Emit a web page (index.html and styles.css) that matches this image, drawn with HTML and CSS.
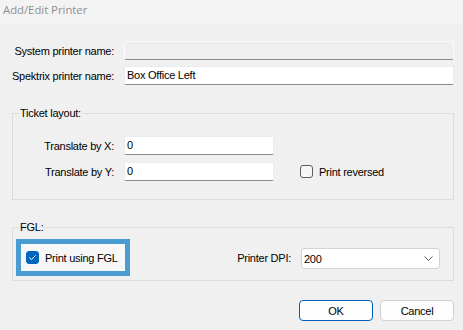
FILE: index.html
```html
<!DOCTYPE html>
<html>
<head>
<meta charset="utf-8">
<link rel="stylesheet" href="styles.css">
</head>
<body>
<div class="titlebar">Add/Edit Printer</div>
<div class="main">
  <div class="names">
    <span class="lbl">System printer name:</span>
    <div class="field disabled"></div>
    <span class="lbl">Spektrix printer name:</span>
    <div class="field">Box Office Left</div>
  </div>

  <div class="group ticket">
    <span class="legend">Ticket layout:</span>
    <div class="ticket-grid">
      <span class="lbl">Translate by X:</span>
      <div class="field">0</div>
      <span></span>
      <span class="lbl">Translate by Y:</span>
      <div class="field">0</div>
      <div class="check"><span class="box"></span><span>Print reversed</span></div>
    </div>
  </div>

  <div class="group fgl">
    <span class="legend">FGL:</span>
    <div class="fgl-row">
      <div class="highlight">
        <span class="box checked"><svg width="13" height="13" viewBox="0 0 13 13"><path d="M3.6 6.8 L5.5 8.6 L9.4 4.6" fill="none" stroke="#fff" stroke-width="1" stroke-linecap="round" stroke-linejoin="round"/></svg></span>
        <span>Print using FGL</span>
      </div>
      <div class="dpi">
        <span class="lbl">Printer DPI:</span>
        <div class="combo"><span>200</span><svg width="9" height="5" viewBox="0 0 9 5"><path d="M0.5 0.5 L4.5 4.5 L8.5 0.5" fill="none" stroke="#606060" stroke-width="1"/></svg></div>
      </div>
    </div>
  </div>

  <div class="buttons">
    <button class="btn primary">OK</button>
    <button class="btn">Cancel</button>
  </div>
</div>
</body>
</html>
```
FILE: styles.css
```css
* { box-sizing: border-box; }
html, body { margin: 0; padding: 0; }
body {
  width: 463px;
  height: 330px;
  overflow: hidden;
  background: #f0f0f0;
  font-family: "Liberation Sans", Arial, sans-serif;
  font-size: 11px;
  letter-spacing: -0.25px;
  color: #000;
}
.titlebar {
  height: 24px;
  background: #f3f3f3;
  color: #8f8f8f;
  font-family: "Open Sans", "Noto Sans", sans-serif;
  font-size: 11.3px;
  letter-spacing: 0;
  line-height: 16px;
  padding: 2px 0 0 3px;
}
.main { padding: 17px 9px 0 12px; }
.names {
  display: grid;
  grid-template-columns: 102px 1fr;
  column-gap: 10px;
  row-gap: 6px;
  align-items: center;
}
.lbl { text-align: right; white-space: nowrap; }
.field {
  height: 19px;
  background: #fff;
  border: 1px solid #ececec;
  border-bottom-color: #8a8a8a;
  border-radius: 2px;
  padding: 0 2px;
  line-height: 17px;
  white-space: nowrap;
}
.field.disabled { background: #efefef; border-color: #fafafa; border-bottom-color: #8d8d8d; }
.group {
  position: relative;
  border: 1px solid #dcdcdc;
}
.legend {
  position: absolute;
  top: -8px;
  left: 6px;
  padding: 0 1px;
  line-height: 15px;
  background: #f0f0f0;
}
.ticket { margin-top: 28px; padding: 22px 0 18px 0; }
.ticket-grid {
  display: grid;
  grid-template-columns: 101px 150px auto;
  column-gap: 10px;
  row-gap: 7px;
  align-items: center;
}
.check { display: flex; align-items: center; gap: 6px; margin-left: 16px; }
.box {
  width: 13px;
  height: 13px;
  border: 1px solid #5c5c5c;
  border-radius: 3px;
  background: #f6f6f6;
  flex: none;
  display: block;
}
.box.checked { background: #0067c0; border-color: #0067c0; }
.box.checked svg { display: block; margin: -1px; }
.fgl { margin-top: 27px; padding: 11px 13px 4px 3px; }
.fgl-row { display: flex; align-items: center; justify-content: space-between; }
.highlight {
  width: 114px;
  height: 37px;
  border: 5px solid #4b9cd3;
  background: #f7f7f7;
  display: flex;
  align-items: center;
  padding-left: 5px;
  gap: 6px;
  white-space: nowrap;
}
.dpi { display: flex; align-items: center; gap: 10px; }
.combo {
  width: 139px;
  height: 21px;
  margin-top: 2px;
  background: #fff;
  border: 1px solid #d3d3d3;
  border-radius: 3px;
  display: flex;
  align-items: center;
  justify-content: space-between;
  padding: 0 6px 0 2px;
}
.combo svg { display: block; }
.buttons { display: flex; justify-content: flex-end; gap: 7px; margin-top: 19px; }
.btn {
  width: 74px;
  height: 21px;
  padding: 0;
  background: #fdfdfd;
  border: 1px solid #d0d0d0;
  border-radius: 4px;
  font: inherit;
  letter-spacing: -0.25px;
  color: #000;
}
.btn.primary { border-color: #005fb8; }
```
